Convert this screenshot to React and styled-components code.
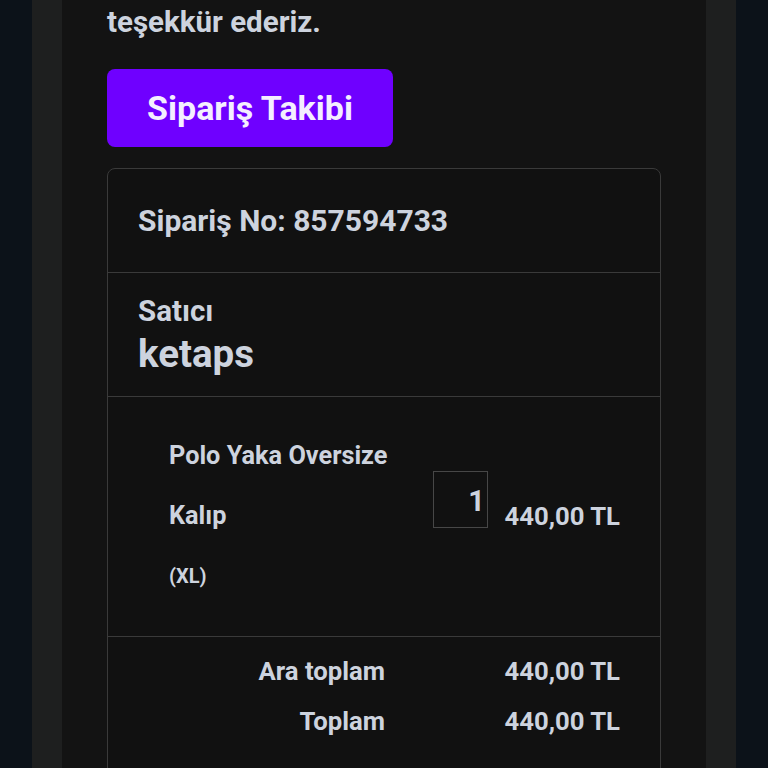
import React from 'react';
import styled, { createGlobalStyle } from 'styled-components';

const GlobalStyle = createGlobalStyle`
  html, body {
    margin: 0;
    padding: 0;
    background: #0c1219;
    overflow: hidden;
  }
  * {
    box-sizing: border-box;
  }
`;

const Page = styled.div`
  display: flex;
  justify-content: center;
  height: 768px;
  background: #0c1219;
  font-family: Roboto, 'Noto Sans', sans-serif;
  color: #cdd3de;
`;

const Frame = styled.div`
  width: 704px;
  padding: 0 30px;
  background: #1e1f1f;
`;

const Panel = styled.main`
  height: 100%;
  padding: 0 45px;
  background: #131313;
`;

const Thanks = styled.p`
  margin: 0;
  padding-top: 2px;
  font-size: 29.5px;
  line-height: 40px;
  font-weight: 700;
`;

const TrackButton = styled.button`
  display: block;
  margin-top: 27px;
  width: 286px;
  height: 78px;
  border: none;
  border-radius: 8px;
  background: #6f00ff;
  color: #f4efff;
  font-family: Roboto, sans-serif;
  font-size: 34px;
  font-weight: 700;
  cursor: pointer;
`;

const Card = styled.section`
  margin-top: 21px;
  width: 554px;
  border: 1px solid #3a3a3a;
  border-radius: 8px;
  background: #111111;
`;

const Section = styled.div`
  padding: ${(p) => p.$pad || '0 30px'};
  border-top: ${(p) => (p.$first ? 'none' : '1px solid #3a3a3a')};
`;

const OrderNo = styled.div`
  height: 103px;
  display: flex;
  align-items: center;
  font-size: 30px;
  font-weight: 700;
`;

const Label = styled.div`
  font-size: 29.5px;
  font-weight: 700;
  line-height: 36px;
`;

const Seller = styled.div`
  font-size: 38.5px;
  font-weight: 700;
  line-height: 50px;
`;

const ItemRow = styled.div`
  display: flex;
  align-items: center;
  padding: 29px 40px 30px 61px;
`;

const ItemInfo = styled.div`
  width: 264px;
`;

const ItemName = styled.div`
  font-size: 25.3px;
  font-weight: 700;
  line-height: 60px;
`;

const Variant = styled.div`
  font-size: 20px;
  font-weight: 700;
  line-height: 60px;
`;

const Qty = styled.div`
  width: 55px;
  height: 57px;
  margin-bottom: 34px;
  padding: 12px 2px 0 0;
  border: 1px solid #474747;
  text-align: right;
  font-size: 29px;
  font-weight: 700;
`;

const Price = styled.div`
  flex: 1;
  text-align: right;
  font-size: 25.7px;
  font-weight: 700;
`;

const Totals = styled.div`
  padding: 9px 40px 40px 0;
`;

const TotalRow = styled.div`
  display: flex;
  height: 50px;
  align-items: center;
  font-size: 25.7px;
  font-weight: 700;
`;

const TotalLabel = styled.div`
  width: 277px;
  text-align: right;
`;

const TotalValue = styled.div`
  flex: 1;
  text-align: right;
`;

export default function App() {
  return (
    <>
      <GlobalStyle />
      <Page>
        <Frame>
          <Panel>
            <Thanks>teşekkür ederiz.</Thanks>
            <TrackButton>Sipariş Takibi</TrackButton>
            <Card>
              <Section $first>
                <OrderNo>Sipariş No: 857594733</OrderNo>
              </Section>
              <Section $pad="20px 30px 17px">
                <Label>Satıcı</Label>
                <Seller>ketaps</Seller>
              </Section>
              <Section $pad="0">
                <ItemRow>
                  <ItemInfo>
                    <ItemName>Polo Yaka Oversize Kalıp</ItemName>
                    <Variant>(XL)</Variant>
                  </ItemInfo>
                  <Qty>1</Qty>
                  <Price>440,00 TL</Price>
                </ItemRow>
              </Section>
              <Section $pad="0">
                <Totals>
                  <TotalRow>
                    <TotalLabel>Ara toplam</TotalLabel>
                    <TotalValue>440,00 TL</TotalValue>
                  </TotalRow>
                  <TotalRow>
                    <TotalLabel>Toplam</TotalLabel>
                    <TotalValue>440,00 TL</TotalValue>
                  </TotalRow>
                </Totals>
              </Section>
            </Card>
          </Panel>
        </Frame>
      </Page>
    </>
  );
}
